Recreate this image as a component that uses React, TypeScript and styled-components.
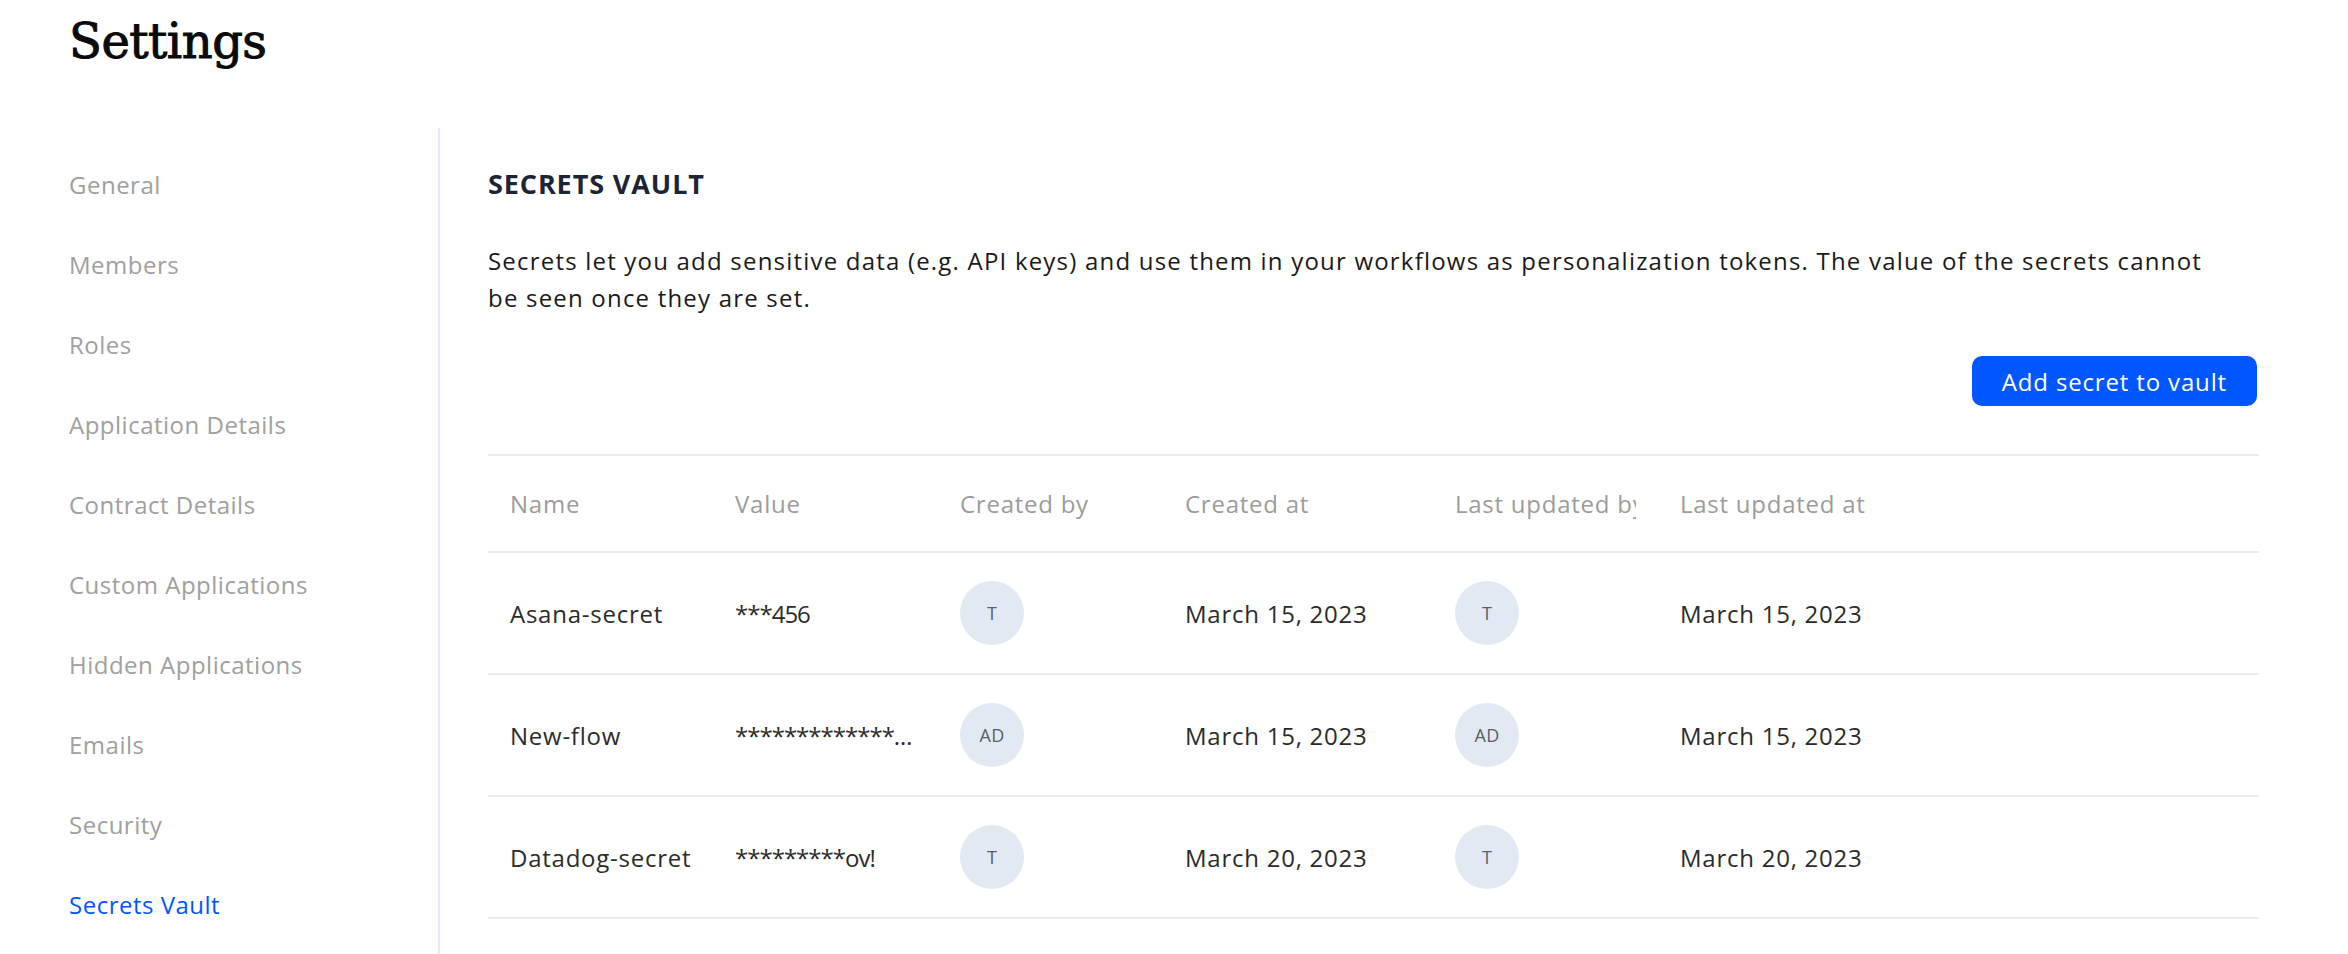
import React from "react";
import styled, { createGlobalStyle } from "styled-components";

const GlobalStyle = createGlobalStyle`
  html, body { margin: 0; padding: 0; background: #ffffff; }
  body {
    font-family: "Open Sans", "Noto Sans", sans-serif;
    color: #1f1f1f;
    letter-spacing: 0.75px;
  }
  * { box-sizing: border-box; }
`;

const Page = styled.div`
  width: 2348px;
  height: 954px;
  overflow: hidden;
  padding-left: 69px;
  display: flex;
  flex-direction: column;
`;

const Header = styled.header`
  height: 128px;
  padding-top: 13px;
  flex: none;
`;

const Title = styled.h1`
  margin: 0;
  font-family: "DejaVu Serif", "Liberation Serif", serif;
  font-weight: 400;
  font-size: 48px;
  line-height: 57.6px;
  color: #0a0a0a;
  letter-spacing: -0.5px;
  -webkit-text-stroke: 1px #0a0a0a;
`;

const Body = styled.div`
  flex: 1;
  display: flex;
  min-height: 0;
`;

const Sidebar = styled.nav`
  width: 371px;
  flex: none;
  border-right: 2px solid #e6e8f5;
  padding-top: 17px;
  display: flex;
  flex-direction: column;
`;

const NavItem = styled.a<{ $active?: boolean }>`
  display: block;
  height: 80px;
  line-height: 80px;
  font-size: 24px;
  letter-spacing: 0.5px;
  color: ${(p) => (p.$active ? "#0057ff" : "#a0a0a0")};
  text-decoration: none;
  cursor: pointer;
  white-space: nowrap;
`;

const Main = styled.main`
  flex: 1;
  padding: 38px 89px 0 48px;
  display: flex;
  flex-direction: column;
`;

const SectionTitle = styled.h2`
  margin: 0;
  font-size: 27px;
  line-height: 36px;
  font-weight: 700;
  color: #1b2536;
  letter-spacing: 0.9px;
`;

const Description = styled.p`
  margin: 40px 0 0;
  max-width: 1737px;
  font-size: 24px;
  line-height: 37px;
  letter-spacing: 1.2px;
  color: #1a1a1a;
`;

const Actions = styled.div`
  margin-top: 40px;
  display: flex;
  justify-content: flex-end;
  padding-right: 2px;
`;

const PrimaryButton = styled.button`
  height: 50px;
  padding: 0 30px;
  border: none;
  border-radius: 10px;
  background: #0057ff;
  color: #ffffff;
  font-family: "Open Sans", "Noto Sans", sans-serif;
  font-size: 24px;
  letter-spacing: 0.85px;
  cursor: pointer;
`;

const Table = styled.table`
  margin-top: 48px;
  width: 100%;
  table-layout: fixed;
  border-collapse: collapse;
  border-top: 2px solid #ebebeb;
`;

const HeadCell = styled.th`
  height: 97px;
  padding: 0 22px;
  text-align: left;
  font-weight: 400;
  font-size: 24px;
  color: #9c9c9c;
  border-bottom: 2px solid #ebebeb;
`;

const HeadLabel = styled.span`
  display: block;
  overflow: hidden;
  white-space: nowrap;
`;

const Cell = styled.td<{ $masked?: boolean }>`
  height: 122px;
  padding: 0 22px;
  font-size: 24px;
  color: #2b2b2b;
  white-space: nowrap;
  overflow: hidden;
  text-overflow: ${(p) => (p.$masked ? "ellipsis" : "clip")};
  letter-spacing: ${(p) => (p.$masked ? "-1px" : "0.75px")};
  border-bottom: 2px solid #ebebeb;
`;

const Avatar = styled.span`
  display: inline-flex;
  align-items: center;
  justify-content: center;
  width: 64px;
  height: 64px;
  border-radius: 50%;
  background: #e3e9f3;
  color: #5a5f68;
  font-size: 18px;
  letter-spacing: 0.3px;
  vertical-align: middle;
`;

const navItems = [
  "General",
  "Members",
  "Roles",
  "Application Details",
  "Contract Details",
  "Custom Applications",
  "Hidden Applications",
  "Emails",
  "Security",
  "Secrets Vault",
];

const columns = [
  { label: "Name", width: 225 },
  { label: "Value", width: 225 },
  { label: "Created by", width: 225 },
  { label: "Created at", width: 270 },
  { label: "Last updated by", width: 225 },
  { label: "Last updated at", width: undefined as number | undefined },
];

const secrets = [
  {
    name: "Asana-secret",
    value: "***456",
    createdBy: "T",
    createdAt: "March 15, 2023",
    updatedBy: "T",
    updatedAt: "March 15, 2023",
  },
  {
    name: "New-flow",
    value: "*********************",
    createdBy: "AD",
    createdAt: "March 15, 2023",
    updatedBy: "AD",
    updatedAt: "March 15, 2023",
  },
  {
    name: "Datadog-secret",
    value: "*********ov!",
    createdBy: "T",
    createdAt: "March 20, 2023",
    updatedBy: "T",
    updatedAt: "March 20, 2023",
  },
];

export default function App() {
  return (
    <>
      <GlobalStyle />
      <Page>
        <Header>
          <Title>Settings</Title>
        </Header>
        <Body>
          <Sidebar>
            {navItems.map((item) => (
              <NavItem key={item} $active={item === "Secrets Vault"}>
                {item}
              </NavItem>
            ))}
          </Sidebar>
          <Main>
            <SectionTitle>SECRETS VAULT</SectionTitle>
            <Description>
              Secrets let you add sensitive data (e.g. API keys) and use them in your workflows as
              personalization tokens. The value of the secrets cannot be seen once they are set.
            </Description>
            <Actions>
              <PrimaryButton>Add secret to vault</PrimaryButton>
            </Actions>
            <Table>
              <colgroup>
                {columns.map((c) => (
                  <col key={c.label} style={c.width ? { width: c.width } : undefined} />
                ))}
              </colgroup>
              <thead>
                <tr>
                  {columns.map((c) => (
                    <HeadCell key={c.label}>
                      <HeadLabel>{c.label}</HeadLabel>
                    </HeadCell>
                  ))}
                </tr>
              </thead>
              <tbody>
                {secrets.map((s) => (
                  <tr key={s.name}>
                    <Cell>{s.name}</Cell>
                    <Cell $masked>{s.value}</Cell>
                    <Cell>
                      <Avatar>{s.createdBy}</Avatar>
                    </Cell>
                    <Cell>{s.createdAt}</Cell>
                    <Cell>
                      <Avatar>{s.updatedBy}</Avatar>
                    </Cell>
                    <Cell>{s.updatedAt}</Cell>
                  </tr>
                ))}
              </tbody>
            </Table>
          </Main>
        </Body>
      </Page>
    </>
  );
}
